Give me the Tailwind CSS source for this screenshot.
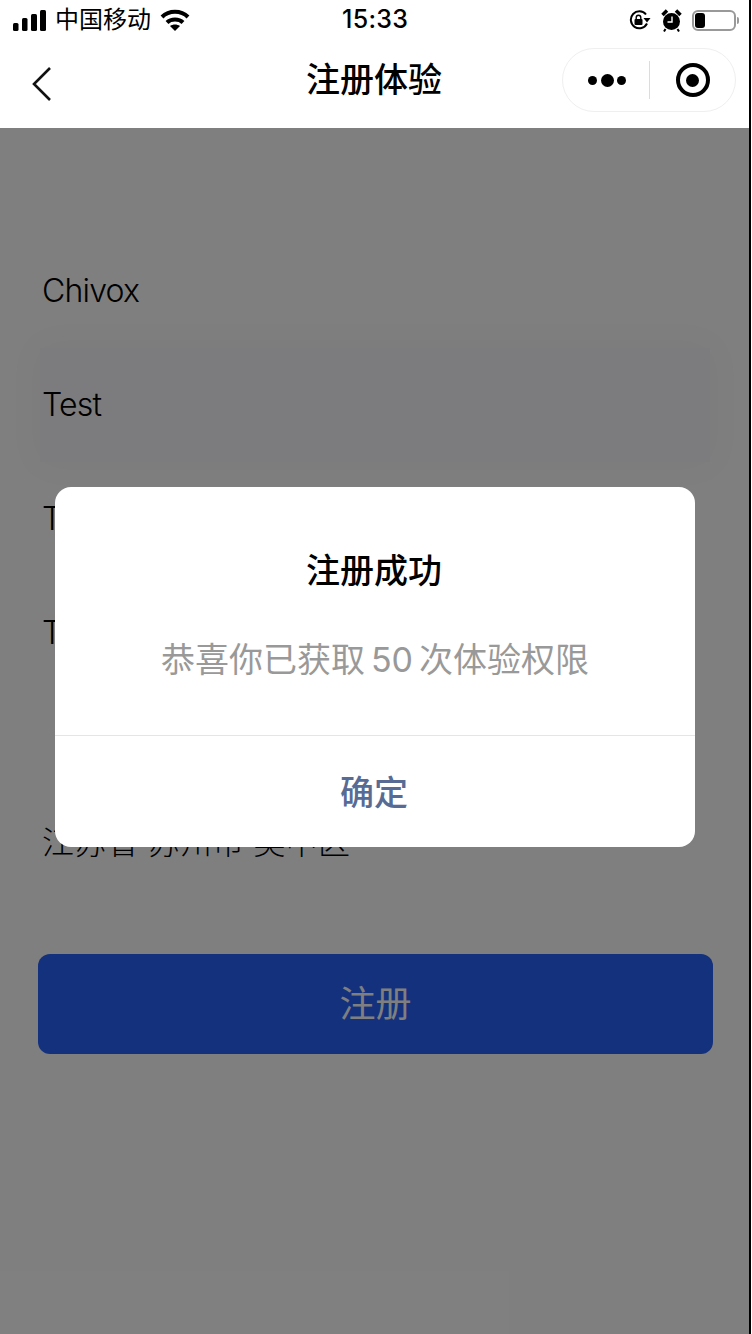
<!DOCTYPE html>
<html lang="zh-CN">
  <head>
    <meta charset="UTF-8" />
    <meta name="viewport" content="width=device-width, initial-scale=1.0" />
    <title>注册体验</title>
    <script src="https://cdn.jsdelivr.net/npm/@tailwindcss/browser@4"></script>
  </head>
  <body class="bg-white">
    <div class="relative w-[750px] h-[1334px] overflow-hidden bg-white font-['Inter','Noto_Sans_CJK_SC',sans-serif] text-black">
      <!-- 表单 -->
      <main class="pt-[234px]">
        <div class="h-[114px] flex items-center pl-[42px] text-[32px] font-light tracking-[-0.8px]">Chivox</div>
        <div class="h-[114px] mx-[40px] flex items-center pl-[2px] text-[32px] font-light tracking-[-0.8px] bg-[#f9f9fc] shadow-[0_0_40px_12px_#f9f9fc]">Test</div>
        <div class="h-[114px] flex items-center pl-[42px] text-[32px] font-light tracking-[-0.8px]">Test</div>
        <div class="h-[114px] flex items-center pl-[42px] text-[32px] font-light tracking-[-0.8px]">Test</div>
        <div class="h-[96px]"></div>
        <div class="h-[114px] flex items-center pl-[42px] text-[32px] font-light tracking-[0.2px]">江苏省 苏州市 吴中区</div>
        <button class="mt-[54px] ml-[38px] w-[675px] h-[100px] rounded-xl bg-[#2862fc] text-white text-[36px] font-normal">注册</button>
      </main>

      <!-- 遮罩 -->
      <div class="absolute left-0 right-0 top-[128px] bottom-0 bg-black/50"></div>

      <!-- 顶部 -->
      <header class="absolute top-0 left-0 w-full h-[128px] bg-white">
        <div class="h-[40px] flex items-center justify-between pl-[13px] pr-[11px] text-[24px]">
          <div class="flex items-center gap-[9px]">
            <svg width="33" height="21" viewBox="0 0 33 21" fill="#000">
              <rect x="0" y="13" width="5.500" height="8" rx="1.500" />
              <rect x="9" y="8" width="5.500" height="13" rx="1.500" />
              <rect x="18" y="4" width="6" height="17" rx="1.500" />
              <rect x="27" y="0" width="6" height="21" rx="1.500" />
            </svg>
            <span>中国移动</span>
            <svg width="30" height="22" viewBox="0 0 30 22" fill="none" stroke="#000" stroke-width="4">
              <path d="M2 8 C9 1 21 1 28 8" />
              <path d="M7 13.500 C11 9.500 19 9.500 23 13.500" />
              <path d="M15 22 L10 17 C13 15 17 15 20 17 Z" fill="#000" stroke="none" />
            </svg>
          </div>
          <span class="absolute left-[342px] text-[25px] font-medium tracking-[0.3px]">15:33</span>
          <div class="flex items-center gap-[10px]">
            <svg width="22" height="20" viewBox="0 0 22 20" fill="none">
              <path d="M17 4.500 A8.500 8.500 0 1 0 18 13.500" stroke="#000" stroke-width="2" />
              <path d="M14.500 8 L21.500 8 L18 12.500 Z" fill="#000" />
              <rect x="5.500" y="9" width="8" height="6" rx="1" fill="#000" />
              <path d="M7.200 9 V7.500 a2.300 2.300 0 0 1 4.600 0 V9" stroke="#000" stroke-width="1.400" />
            </svg>
            <svg width="21" height="23" viewBox="0 0 21 23" fill="none">
              <circle cx="10.500" cy="12.500" r="8.500" fill="#000" />
              <path d="M11 7.500 V13 H6.500" stroke="#fff" stroke-width="1.400" />
              <path d="M1.500 6 L6 1.500 M19.500 6 L15 1.500" stroke="#000" stroke-width="3.500" />
              <path d="M4.500 20 L3 22.500 M16.500 20 L18 22.500" stroke="#000" stroke-width="2" />
            </svg>
            <div class="flex items-center gap-[1px]">
              <div class="w-[44px] h-[21px] rounded-[6px] border-2 border-[#999999] p-[1px]">
                <div class="w-[10px] h-full rounded-[3px] bg-black"></div>
              </div>
              <div class="w-[2px] h-[7px] rounded-r bg-[#999999]"></div>
            </div>
          </div>
        </div>
        <div class="relative h-[88px] flex items-center justify-center">
          <svg class="absolute left-[31px] top-[26px]" width="22" height="36" viewBox="0 0 22 36" fill="none" stroke="#111" stroke-width="2.600">
            <path d="M19 2 L3 18 L19 34" />
          </svg>
          <h1 class="text-[34px] font-medium leading-none -mt-[8px] -ml-[2px]">注册体验</h1>
          <div class="absolute left-[562px] top-[8px] w-[174px] h-[64px] rounded-full border border-[#efefef] flex items-center">
            <div class="w-[86px] pl-[2px] flex items-center justify-center gap-[3.500px]">
              <span class="w-[9px] h-[9px] rounded-full bg-black"></span>
              <span class="w-[13px] h-[13px] rounded-full bg-black"></span>
              <span class="w-[9px] h-[9px] rounded-full bg-black"></span>
            </div>
            <div class="w-px h-[38px] bg-[#dcdcdc]"></div>
            <div class="flex-1 flex items-center justify-center">
              <div class="w-[34px] h-[34px] rounded-full border-[4.500px] border-black flex items-center justify-center">
                <span class="w-[13px] h-[13px] rounded-full bg-black"></span>
              </div>
            </div>
          </div>
        </div>
      </header>

      <!-- 弹窗 -->
      <div class="absolute inset-0 flex items-center justify-center">
        <div class="w-[640px] h-[360px] rounded-2xl bg-white flex flex-col">
          <div class="h-[249px] flex flex-col items-center border-b border-[#e5e5e5]">
            <h2 class="mt-[67px] -ml-[2px] text-[34px] font-medium leading-[34px]">注册成功</h2>
            <p class="mt-[47px] text-[34px] leading-[50px] text-[#999999] font-normal">恭喜你已获取<span class="mx-[6px]">50</span>次体验权限</p>
          </div>
          <button class="flex-1 pt-[2px] -ml-[2px] text-[34px] font-medium text-[#576b95]">确定</button>
        </div>
      </div>
    </div>
    <!-- 截图右侧黑边 -->
    <div class="absolute left-[749px] top-0 w-[2px] h-[1334px] bg-black"></div>
  </body>
</html>
